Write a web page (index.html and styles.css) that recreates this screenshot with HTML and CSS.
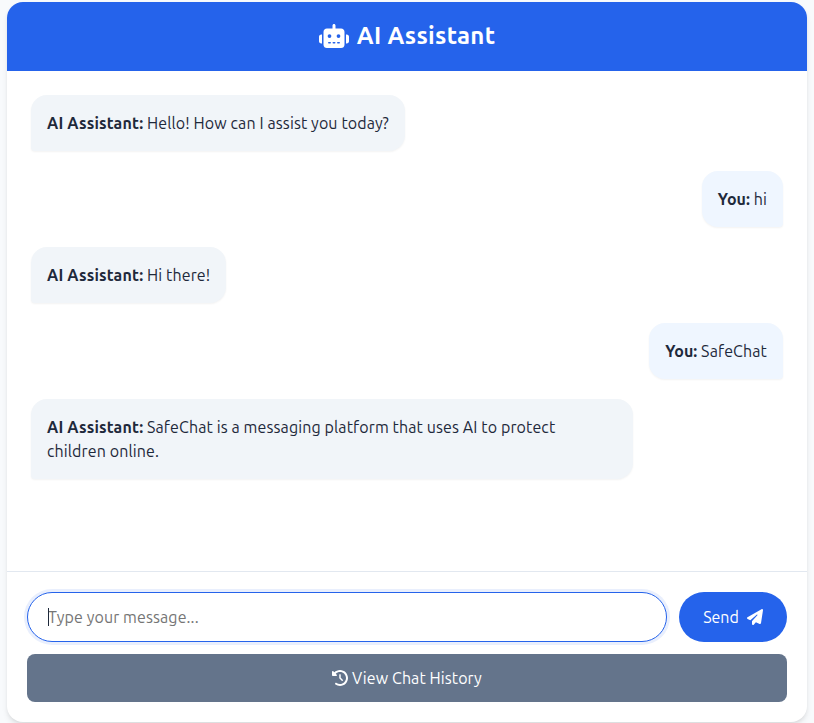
FILE: index.html
```html
<!DOCTYPE html>
<html lang="en">
<head>
<meta charset="utf-8">
<title>AI Assistant</title>
<link rel="stylesheet" href="styles.css">
</head>
<body>
<main class="chat">
  <header class="chat-header">
    <svg class="icon-robot" viewBox="0 0 640 512" aria-hidden="true"><path d="M320 0c17.7 0 32 14.3 32 32V96H472c39.8 0 72 32.2 72 72V440c0 39.8-32.2 72-72 72H168c-39.8 0-72-32.2-72-72V168c0-39.8 32.2-72 72-72H288V32c0-17.7 14.3-32 32-32zM208 384c-8.8 0-16 7.2-16 16s7.2 16 16 16h32c8.8 0 16-7.2 16-16s-7.2-16-16-16H208zm96 0c-8.8 0-16 7.2-16 16s7.2 16 16 16h32c8.8 0 16-7.2 16-16s-7.2-16-16-16H304zm96 0c-8.8 0-16 7.2-16 16s7.2 16 16 16h32c8.8 0 16-7.2 16-16s-7.2-16-16-16H400zM264 256a40 40 0 1 0 -80 0 40 40 0 1 0 80 0zm152 40a40 40 0 1 0 0-80 40 40 0 1 0 0 80zM48 224H64V416H48c-26.5 0-48-21.5-48-48V272c0-26.5 21.5-48 48-48zm544 0c26.5 0 48 21.5 48 48v96c0 26.5-21.5 48-48 48H576V224h16z"/></svg>
    <h1>AI Assistant</h1>
  </header>
  <section class="messages">
    <p class="message bot"><strong>AI Assistant:</strong> Hello! How can I assist you today?</p>
    <p class="message user"><strong>You:</strong> hi</p>
    <p class="message bot"><strong>AI Assistant:</strong> Hi there!</p>
    <p class="message user"><strong>You:</strong> SafeChat</p>
    <p class="message bot"><strong>AI Assistant:</strong> SafeChat is a messaging platform that uses AI to protect children online.</p>
  </section>
  <footer class="composer">
    <div class="composer-row">
      <div class="field">
        <input class="input" type="text" placeholder="Type your message...">
        <span class="caret"></span>
      </div>
      <button class="send" type="button"><span>Send</span><svg class="icon" viewBox="0 0 512 512" aria-hidden="true"><path d="M498.1 5.6c10.1 7 15.4 19.1 13.5 31.2l-64 416c-1.5 9.7-7.4 18.2-16 23s-18.9 5.4-28 1.6L284 427.7l-68.5 74.1c-8.9 9.7-22.9 12.9-35.2 8.1S160 493.2 160 480V396.4c0-4 1.5-7.8 4.2-10.7L331.8 202.8c5.8-6.3 5.6-16-.4-22s-15.7-6.4-22-.7L106 360.8 17.7 316.6C7.1 311.3 .3 300.7 0 288.9s5.9-22.8 16.1-28.7l448-256c10.7-6.1 23.9-5.5 34 1.4z"/></svg></button>
    </div>
    <button class="history" type="button"><svg class="icon" viewBox="0 0 512 512" aria-hidden="true"><path d="M75 75L41 41C25.9 25.9 0 36.6 0 57.9V168c0 13.3 10.7 24 24 24H134.1c21.4 0 32.1-25.9 17-41l-30.8-30.8C155 85.5 203 64 256 64c106 0 192 86 192 192s-86 192-192 192c-40.8 0-78.6-12.7-109.7-34.4c-14.5-10.1-34.4-6.6-44.6 7.9s-6.6 34.4 7.9 44.6C151.2 495 201.7 512 256 512c141.4 0 256-114.6 256-256S397.4 0 256 0C185.3 0 121.3 28.7 75 75zm181 53c-13.3 0-24 10.7-24 24V256c0 6.4 2.5 12.5 7 17l72 72c9.4 9.4 24.6 9.4 33.9 0s9.4-24.6 0-33.9l-65-65V152c0-13.3-10.7-24-24-24z"/></svg><span>View Chat History</span></button>
  </footer>
</main>
</body>
</html>
```
FILE: styles.css
```css
* { box-sizing: border-box; }
body {
  margin: 0;
  padding: 2px 7px 0;
  height: 723px;
  overflow: hidden;
  background: #f8fafc;
  color: #1e293b;
  font: 16px/24px Ubuntu, "Noto Sans", sans-serif;
}
.chat {
  display: flex;
  flex-direction: column;
  width: 800px;
  height: 720px;
  border-radius: 16px;
  overflow: hidden;
  background: #fff;
  box-shadow: 0 4px 6px -1px rgba(0, 0, 0, .1), 0 2px 4px -1px rgba(0, 0, 0, .06);
}
.chat-header {
  flex: none;
  display: flex;
  align-items: center;
  justify-content: center;
  gap: 8px;
  height: 69px;
  padding-bottom: 2px;
  background: #2563eb;
  color: #fff;
}
.chat-header h1 { margin: 0; font-size: 24px; line-height: 29px; font-weight: 700; letter-spacing: .3px; }
svg { fill: currentColor; flex: none; }
.icon-robot { width: 30px; height: 24px; }
.icon { width: 16px; height: 16px; }
.messages {
  flex: 1;
  display: flex;
  flex-direction: column;
  align-items: flex-start;
  gap: 20px;
  padding: 24px;
}
.message {
  margin: 0;
  max-width: 80%;
  padding: 16px;
  border-radius: 16px;
  font-size: 16px;
  letter-spacing: .11px;
  box-shadow: 0 1px 2px rgba(0, 0, 0, .05);
}
.message strong { font-weight: 700; }
.bot { background: #f1f5f9; border-bottom-left-radius: 4px; }
.bot strong { letter-spacing: .17px; }
.user { align-self: flex-end; background: #eff6ff; border-bottom-right-radius: 4px; }
.user strong { letter-spacing: .05px; }
.composer {
  flex: none;
  display: flex;
  flex-direction: column;
  gap: 12px;
  padding: 20px;
  border-top: 1px solid #e2e8f0;
}
.composer-row { display: flex; gap: 12px; height: 50px; }
.field { position: relative; flex: 1; }
.input {
  width: 100%;
  height: 50px;
  padding: 0 20px;
  border: 1px solid #2563eb;
  border-radius: 25px;
  outline: 0;
  background: #fff;
  box-shadow: 0 0 0 3px rgba(37, 99, 235, .1);
  font: inherit;
  letter-spacing: .1px;
}
.input::placeholder { color: #757575; opacity: 1; }
.caret { position: absolute; left: 21px; top: 16px; width: 1px; height: 18px; background: #1e293b; }
button { border: 0; padding: 0; color: #fff; font: inherit; display: flex; align-items: center; justify-content: center; }
.send { width: 108px; border-radius: 25px; background: #2563eb; gap: 8px; }
.history { height: 48px; border-radius: 8px; background: #64748b; gap: 4px; letter-spacing: .09px; }
```
